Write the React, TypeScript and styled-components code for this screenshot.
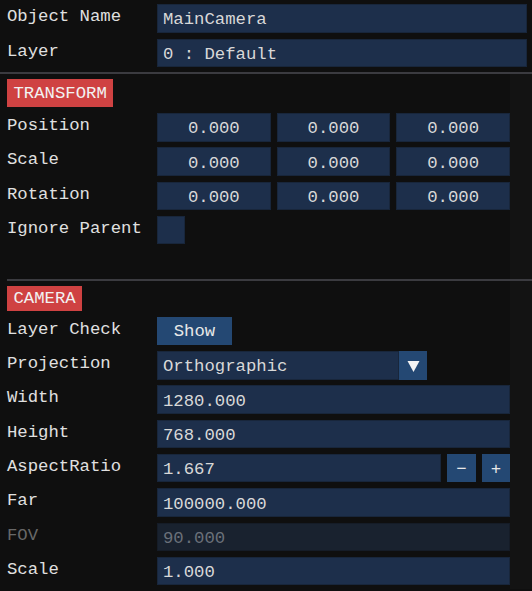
import styled, { createGlobalStyle, css } from 'styled-components'

const GlobalStyle = createGlobalStyle`
  html, body {
    margin: 0;
    padding: 0;
    background: #0f0f0f;
  }
  body {
    font-family: 'Liberation Mono', 'DejaVu Sans Mono', monospace;
    font-size: 17.3px;
    color: #e0e0e0;
    overflow: hidden;
  }
`

const Page = styled.div`
  width: 532px;
  height: 591px;
  overflow: hidden;
  background: #0f0f0f;
`

const Header = styled.div`
  display: flex;
  flex-direction: column;
  gap: 6px;
  padding: 4px 5px 0 7px;
`

const Separator = styled.div<{ $inset?: boolean }>`
  height: 2px;
  background: #3b3b40;
  margin-top: ${(p) => (p.$inset ? '34.5px' : '5px')};
  margin-right: ${(p) => (p.$inset ? '-22px' : '0')};
`

const Panel = styled.div`
  padding: 0 22px 0 7px;
  background: linear-gradient(to right, transparent 510px, #131313 510px);
  height: 515px;
`

const Badge = styled.div<{ $h: number }>`
  display: inline-flex;
  align-items: center;
  justify-content: center;
  height: ${(p) => p.$h}px;
  padding: 1px 6.5px 0;
  box-sizing: border-box;
  margin-top: 5px;
  background: #cf4242;
  color: #f2f2f2;
  line-height: 1;
`

const Rows = styled.div<{ $top: number }>`
  display: flex;
  flex-direction: column;
  gap: 5.83px;
  margin-top: ${(p) => p.$top}px;
`

const Row = styled.div`
  display: grid;
  grid-template-columns: 150px 1fr;
  height: 28.5px;
`

const Label = styled.div<{ $disabled?: boolean }>`
  line-height: 20px;
  padding-top: 3px;
  white-space: pre;
  color: ${(p) => (p.$disabled ? '#686868' : '#e0e0e0')};
`

const frame = css`
  box-sizing: border-box;
  height: 28.5px;
  border: 1px solid #18263b;
  background: #1d2f4b;
  display: flex;
  align-items: center;
  padding-top: 3px;
  white-space: pre;
`

const Field = styled.div<{ $center?: boolean; $disabled?: boolean }>`
  ${frame};
  padding-left: ${(p) => (p.$center ? '0' : '5px')};
  justify-content: ${(p) => (p.$center ? 'center' : 'flex-start')};
  color: ${(p) => (p.$disabled ? '#6a7079' : '#d8d8d8')};
  background: ${(p) => (p.$disabled ? '#19222f' : '#1d2f4b')};
  border-color: ${(p) => (p.$disabled ? '#151c27' : '#18263b')};
  min-width: 0;
`

const Vector = styled.div`
  display: grid;
  grid-template-columns: repeat(3, 1fr);
  gap: 6px;
`

const Check = styled.div`
  ${frame};
  width: 28px;
`

const Button = styled.div<{ $w?: number }>`
  box-sizing: border-box;
  height: 28.5px;
  width: ${(p) => (p.$w ? `${p.$w}px` : 'auto')};
  background: #244873;
  display: flex;
  align-items: center;
  justify-content: center;
  padding-top: 2px;
  color: #e8e8e8;
`

const Combo = styled.div`
  display: grid;
  grid-template-columns: 1fr 28px;
  width: 270px;
`

const Stepper = styled.div`
  display: grid;
  grid-template-columns: 1fr 29px 28px;
  gap: 6px;
`

const Arrow = () => (
  <svg width="13" height="13" viewBox="0 0 13 13">
    <polygon points="0.5,1 12.5,1 6.5,12" fill="#f4f4f4" />
  </svg>
)

const vec = ['0.000', '0.000', '0.000']

export default function App() {
  return (
    <Page>
      <GlobalStyle />
      <Header>
        <Row>
          <Label>Object Name</Label>
          <Field>MainCamera</Field>
        </Row>
        <Row>
          <Label>Layer</Label>
          <Field>0 : Default</Field>
        </Row>
      </Header>
      <Separator />
      <Panel>
        <Badge $h={28}>TRANSFORM</Badge>
        <Rows $top={6}>
          {['Position', 'Scale', 'Rotation'].map((name) => (
            <Row key={name}>
              <Label>{name}</Label>
              <Vector>
                {vec.map((v, i) => (
                  <Field key={i} $center>
                    {v}
                  </Field>
                ))}
              </Vector>
            </Row>
          ))}
          <Row>
            <Label>Ignore Parent</Label>
            <Check />
          </Row>
        </Rows>
        <Separator $inset />
        <Badge $h={25}>CAMERA</Badge>
        <Rows $top={5.7}>
          <Row>
            <Label>Layer Check</Label>
            <Button $w={75}>Show</Button>
          </Row>
          <Row>
            <Label>Projection</Label>
            <Combo>
              <Field>Orthographic</Field>
              <Button>
                <Arrow />
              </Button>
            </Combo>
          </Row>
          <Row>
            <Label>Width</Label>
            <Field>1280.000</Field>
          </Row>
          <Row>
            <Label>Height</Label>
            <Field>768.000</Field>
          </Row>
          <Row>
            <Label>AspectRatio</Label>
            <Stepper>
              <Field>1.667</Field>
              <Button>−</Button>
              <Button>+</Button>
            </Stepper>
          </Row>
          <Row>
            <Label>Far</Label>
            <Field>100000.000</Field>
          </Row>
          <Row>
            <Label $disabled>FOV</Label>
            <Field $disabled>90.000</Field>
          </Row>
          <Row>
            <Label>Scale</Label>
            <Field>1.000</Field>
          </Row>
        </Rows>
      </Panel>
    </Page>
  )
}
